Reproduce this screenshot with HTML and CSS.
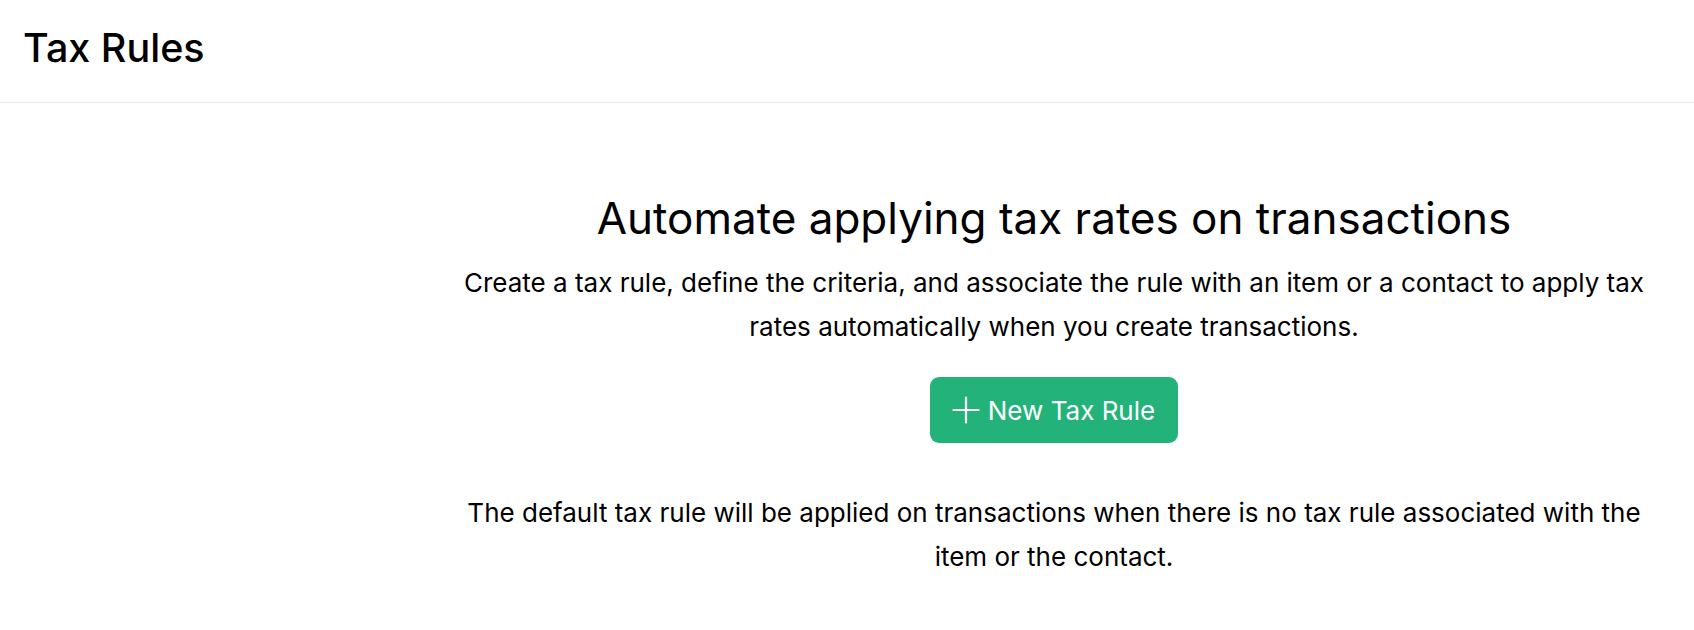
FILE: index.html
```html
<!DOCTYPE html>
<html lang="en">
<head>
<meta charset="utf-8">
<title>Tax Rules</title>
<link rel="stylesheet" href="styles.css">
</head>
<body>
<header class="page-header">
  <h1 class="page-title">Tax Rules</h1>
</header>
<main class="content">
  <section class="empty-state">
    <h2 class="empty-title">Automate applying tax rates on transactions</h2>
    <p class="empty-desc">Create a tax rule, define the criteria, and associate the rule with an item or a contact to apply tax rates automatically when you create transactions.</p>
    <button class="btn-primary" type="button">
      <svg class="btn-icon" width="28" height="28" viewBox="0 0 28 28" aria-hidden="true">
        <path d="M14 1.5V26.5M1.5 14H26.5" stroke="#fff" stroke-width="2.2" fill="none" stroke-linecap="round"/>
      </svg>
      <span>New Tax Rule</span>
    </button>
    <p class="empty-note">The default tax rule will be applied on transactions when there is no tax rule associated with the item or the contact.</p>
  </section>
</main>
</body>
</html>
```

FILE: styles.css
```css
* { box-sizing: border-box; }

html, body {
  margin: 0;
  padding: 0;
  background: #ffffff;
  color: #000000;
  font-family: Inter, "Noto Sans", "Liberation Sans", sans-serif;
}

.page-header {
  height: 103px;
  padding: 24px 0 0 23px;
  border-bottom: 1px solid #ebebeb;
}

.page-title {
  margin: 0;
  font-size: 39.5px;
  line-height: 48px;
  font-weight: 500;
}

.content {
  padding-left: 414px;
}

.empty-state {
  display: flex;
  flex-direction: column;
  align-items: center;
  text-align: center;
  max-width: 1280px;
  margin: 0 auto;
  padding-top: 88px;
}

.empty-title {
  margin: 0;
  font-size: 44px;
  line-height: 54px;
  font-weight: 400;
}

.empty-desc {
  margin: 16px 0 0;
  max-width: 1200px;
  font-size: 26px;
  line-height: 44px;
}

.btn-primary {
  margin-top: 28px;
  display: flex;
  align-items: center;
  gap: 8px;
  height: 66px;
  padding: 0 23px 0 22px;
  border: none;
  border-radius: 9px;
  background: #23b37a;
  color: #ffffff;
  font-family: inherit;
  font-size: 26px;
  font-weight: 400;
  cursor: pointer;
}

.btn-icon { display: block; }

.empty-note {
  margin: 48px 0 0;
  max-width: 1200px;
  font-size: 26px;
  line-height: 44px;
}
```
